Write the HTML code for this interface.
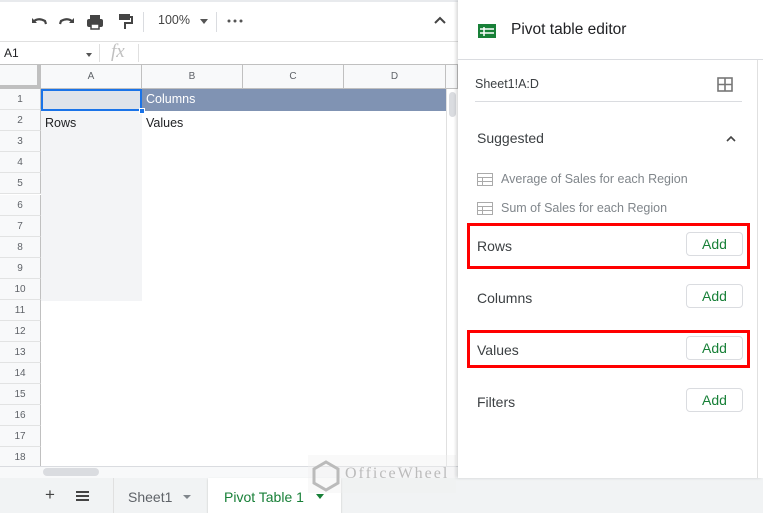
<!DOCTYPE html>
<html><head><meta charset="utf-8"><style>
*{box-sizing:border-box;margin:0;padding:0}
body{width:763px;height:513px;overflow:hidden;background:#fff;font-family:"Liberation Sans",Arial,sans-serif;position:relative;color:#202124}
.a{position:absolute}
.rh{position:absolute;left:0;width:41px;height:21px;text-align:center;font-size:10px;color:#5f6368;line-height:21px;background:#f8f9fa;border-bottom:1px solid #e2e3e3;border-right:1px solid #c0c0c0}
.ch{position:absolute;top:65px;height:24px;font-size:10px;color:#5f6368;text-align:center;line-height:24px;background:#f8f9fa;border-right:1px solid #c0c0c0;border-bottom:1px solid #c0c0c0}
.lbl{position:absolute;left:477px;font-size:14px;color:#3c4043}
.btn{position:absolute;left:686px;width:57px;height:24px;border:1px solid #dadce0;border-radius:4px;color:#188038;font-size:14px;text-align:center;line-height:22px;background:#fff}
.red{position:absolute;left:467px;width:283px;border:3px solid #f00}
.sg{position:absolute;left:501px;font-size:12.5px;color:#80868b}
</style></head><body>
<div class="a" style="left:0;top:0;width:458px;height:42px;border-top:2px solid #e8eaed;border-bottom:1px solid #e0e0e0;background:#fff"></div>
<svg class="a" style="left:30px;top:13px" width="120" height="18" viewBox="0 0 120 18">
<path d="M3 9 Q8 4 15 8 L16 11" stroke="#444" stroke-width="2.2" fill="none"/><path d="M2 5 L2 10 L7 10Z" fill="#444"/>
<path d="M43 9 Q38 4 31 8 L30 11" stroke="#444" stroke-width="2.2" fill="none"/><path d="M44 5 L44 10 L39 10Z" fill="#444"/>
<rect x="60" y="2" width="10" height="4" fill="#444"/><rect x="57" y="6" width="16" height="8" rx="2" fill="#444"/><rect x="61" y="11" width="8" height="5" fill="#fff" stroke="#444" stroke-width="1.5"/>
<rect x="89" y="1" width="11" height="6" fill="#444"/><path d="M100 4 H102 V10 H95 V16" stroke="#444" stroke-width="2" fill="none"/>
</svg>
<div class="a" style="left:143px;top:12px;width:1px;height:20px;background:#dadce0"></div>
<div class="a" style="left:158px;top:13px;font-size:12.5px;color:#444">100%</div>
<div class="a" style="left:200px;top:19px;border:4px solid transparent;border-top:5px solid #555"></div>
<div class="a" style="left:216px;top:12px;width:1px;height:20px;background:#dadce0"></div>
<svg class="a" style="left:227px;top:19px" width="16" height="4"><circle cx="2" cy="2" r="1.5" fill="#555"/><circle cx="8" cy="2" r="1.5" fill="#555"/><circle cx="14" cy="2" r="1.5" fill="#555"/></svg>
<svg class="a" style="left:434px;top:16px" width="12" height="8"><path d="M1 7 L6 2 L11 7" stroke="#444" stroke-width="2" fill="none"/></svg>
<div class="a" style="left:0;top:42px;width:458px;height:23px;border-bottom:1px solid #c0c0c0;background:#fff"></div>
<div class="a" style="left:4px;top:46px;font-size:12px">A1</div>
<div class="a" style="left:86px;top:53px;border:3.5px solid transparent;border-top:4px solid #555"></div>
<div class="a" style="left:99px;top:44px;width:1px;height:18px;background:#e0e0e0"></div>
<div class="a" style="left:111px;top:41px;font-size:19px;font-style:italic;color:#c0c0c0;font-family:'Liberation Serif',serif">fx</div>
<div class="a" style="left:138px;top:44px;width:1px;height:18px;background:#e0e0e0"></div>
<div class="ch" style="left:0;width:41px;border-right:4px solid #c0c0c0;border-bottom:4px solid #c0c0c0"></div>
<div class="ch" style="left:41px;width:101px">A</div>
<div class="ch" style="left:142px;width:101px">B</div>
<div class="ch" style="left:243px;width:101px">C</div>
<div class="ch" style="left:344px;width:102px">D</div>
<div class="ch" style="left:446px;width:12px"></div>
<div class="a" style="left:41px;top:110px;width:101px;height:191px;background:#f3f4f6"></div>
<div class="a" style="left:142px;top:89px;width:304px;height:22px;background:#8093b3"></div>
<div class="a" style="left:146px;top:92px;font-size:12.5px;color:#fff">Columns</div>
<div class="a" style="left:41px;top:89px;width:101px;height:22px;background:#dfe3ea;border:2px solid #1a73e8"></div>
<div class="a" style="left:139px;top:108px;width:6px;height:6px;background:#1a73e8;border:1px solid #fff"></div>
<div class="a" style="left:45px;top:116px;font-size:12.5px">Rows</div>
<div class="a" style="left:146px;top:116px;font-size:12.5px">Values</div>
<div class="rh" style="top:89px">1</div><div class="rh" style="top:110px">2</div><div class="rh" style="top:131px">3</div><div class="rh" style="top:152px">4</div><div class="rh" style="top:173px">5</div><div class="rh" style="top:195px">6</div><div class="rh" style="top:216px">7</div><div class="rh" style="top:237px">8</div><div class="rh" style="top:258px">9</div><div class="rh" style="top:279px">10</div><div class="rh" style="top:300px">11</div><div class="rh" style="top:321px">12</div><div class="rh" style="top:342px">13</div><div class="rh" style="top:363px">14</div><div class="rh" style="top:384px">15</div><div class="rh" style="top:405px">16</div><div class="rh" style="top:426px">17</div><div class="rh" style="top:447px">18</div>
<div class="a" style="left:446px;top:89px;width:12px;height:389px;background:#fff;border-left:1px solid #e0e0e0"></div>
<div class="a" style="left:449px;top:92px;width:7px;height:25px;background:#dadce0;border-radius:4px"></div>
<div class="a" style="left:0;top:466px;width:458px;height:12px;background:#f8f9fa;border-top:1px solid #dadce0"></div>
<div class="a" style="left:43px;top:468px;width:56px;height:8px;background:#dadce0;border-radius:4px"></div>
<div class="a" style="left:0;top:478px;width:763px;height:35px;background:#f1f3f4"></div>
<div class="a" style="left:45px;top:485px;font-size:17px;color:#444">+</div>
<div class="a" style="left:76px;top:491px;width:13px;height:10px;border-top:2px solid #444;border-bottom:2px solid #444"></div>
<div class="a" style="left:76px;top:495px;width:13px;height:2px;background:#444"></div>
<div class="a" style="left:113px;top:478px;width:1px;height:35px;background:#e0e0e0"></div>
<div class="a" style="left:128px;top:489px;font-size:14px;color:#5f6368">Sheet1</div>
<div class="a" style="left:183px;top:495px;border:4px solid transparent;border-top:4px solid #80868b"></div>
<div class="a" style="left:208px;top:478px;width:133px;height:35px;background:#fff;box-shadow:0 1px 2px rgba(0,0,0,.2)"></div>
<div class="a" style="left:224px;top:489px;font-size:14px;color:#188038">Pivot Table 1</div>
<div class="a" style="left:316px;top:494px;border:4px solid transparent;border-top:5px solid #188038"></div>
<div class="a" style="left:308px;top:455px;width:148px;height:38px;background:rgba(240,240,240,.4)"></div>
<svg class="a" style="left:312px;top:460px" width="28" height="32"><path d="M14 2 L26 9 V23 L14 30 L2 23 V9Z" fill="none" stroke="#bbb" stroke-width="3"/></svg>
<div class="a" style="left:345px;top:465px;font-size:16px;color:#bbb;letter-spacing:2px;font-family:'Liberation Serif',serif">OfficeWheel</div>
<div class="a" style="left:458px;top:0;width:305px;height:478px;background:#fff;box-shadow:-2px 0 3px rgba(0,0,0,.15)"></div>
<div class="a" style="left:458px;top:59px;width:305px;height:1px;background:#dadce0"></div>
<div class="a" style="left:757px;top:60px;width:1px;height:418px;background:#e0e0e0"></div>
<svg class="a" style="left:478px;top:24px" width="18" height="14"><rect width="18" height="14" fill="#188038"/><path d="M2 5 H16 M2 9 H16 M6 3 V12" stroke="#fff" stroke-width="1.5"/></svg>
<div class="a" style="left:511px;top:21px;font-size:15.5px;color:#202124">Pivot table editor</div>
<div class="a" style="left:475px;top:77px;font-size:12.5px;color:#3c4043">Sheet1!A:D</div>
<svg class="a" style="left:717px;top:77px" width="16" height="15"><rect x="1" y="1" width="14" height="13" fill="none" stroke="#777" stroke-width="1.6"/><path d="M8 1 V14 M1 7.5 H15" stroke="#777" stroke-width="1.6"/></svg>
<div class="a" style="left:475px;top:101px;width:267px;height:1px;background:#dadce0"></div>
<div class="a" style="left:477px;top:130px;font-size:14px;color:#3c4043">Suggested</div>
<svg class="a" style="left:725px;top:135px" width="12" height="8"><path d="M2 6 L6 2 L10 6" stroke="#444" stroke-width="1.6" fill="none"/></svg>
<svg class="a" style="left:477px;top:173px" width="16" height="13"><rect x=".5" y=".5" width="15" height="12" fill="none" stroke="#aaa"/><path d="M.5 4.5 H15.5 M.5 8.5 H15.5 M5.5 4.5 V12.5" stroke="#aaa"/></svg>
<div class="sg" style="top:172px">Average of Sales for each Region</div>
<svg class="a" style="left:477px;top:202px" width="16" height="13"><rect x=".5" y=".5" width="15" height="12" fill="none" stroke="#aaa"/><path d="M.5 4.5 H15.5 M.5 8.5 H15.5 M5.5 4.5 V12.5" stroke="#aaa"/></svg>
<div class="sg" style="top:201px">Sum of Sales for each Region</div>
<div class="red" style="top:223px;height:46px"></div>
<div class="lbl" style="top:238px">Rows</div><div class="btn" style="top:232px">Add</div>
<div class="lbl" style="top:290px">Columns</div><div class="btn" style="top:284px">Add</div>
<div class="red" style="top:330px;height:38px"></div>
<div class="lbl" style="top:342px">Values</div><div class="btn" style="top:336px">Add</div>
<div class="lbl" style="top:394px">Filters</div><div class="btn" style="top:388px">Add</div>
</body></html>
